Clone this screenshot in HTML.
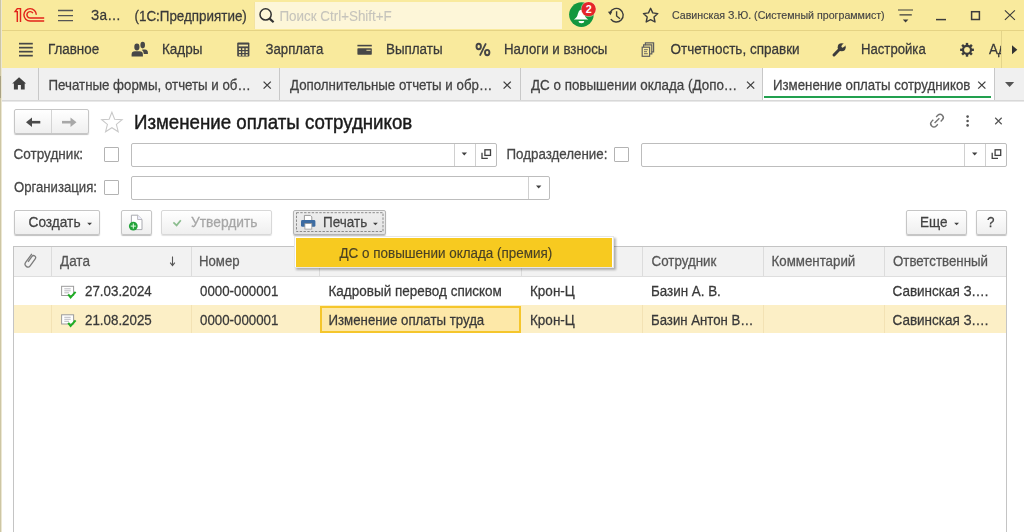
<!DOCTYPE html>
<html><head><meta charset="utf-8">
<style>
html,body{margin:0;padding:0;}
body{width:1024px;height:532px;overflow:hidden;position:relative;background:#fff;font-family:"Liberation Sans",sans-serif;color:#404040;}
.a{position:absolute;}
.t{position:absolute;white-space:nowrap;line-height:1;font-size:13.5px;transform:scaleY(1.05);transform-origin:0 0.8467em;-webkit-text-stroke:0.25px currentColor;}
svg{position:absolute;overflow:visible;}
#titlebar{left:0;top:0;width:1024px;height:30px;background:#f9ea9d;}
#tbline{left:0;top:30px;width:1024px;height:1px;background:#e5d384;}
#sections{left:0;top:31px;width:1024px;height:37px;background:#f9ea9d;}
#tabs{left:0;top:68px;width:1024px;height:32px;background:#f0f0f0;}
#tabsline{left:0;top:100px;width:1024px;height:2px;background:linear-gradient(#d8d8d8 50%,#e8e8e8 50%);}
#leftedge{left:0;top:0;width:2px;height:532px;background:linear-gradient(90deg,#cdc6a4 0,#cdc6a4 1px,#ece7d2 1px,#ece7d2 2px);}
#leftdark{left:0;top:76px;width:1px;height:22px;background:#a9a283;}
.vd{position:absolute;width:1px;background:#c8c8c8;}
.field{position:absolute;border:1px solid #bdbdbd;border-radius:2px;background:#fff;box-sizing:border-box;}
.chk{position:absolute;width:15px;height:15px;border:1px solid #b3b3b3;border-radius:1px;box-sizing:border-box;background:#fff;}
.btn{position:absolute;box-sizing:border-box;border:1px solid #c6c6c6;border-radius:2px;background:linear-gradient(#ffffff,#efefef);box-shadow:0 1px 1px rgba(0,0,0,0.25);}
</style></head>
<body>
<div class="a" id="titlebar"></div>
<div class="a" id="tbline"></div>
<div class="a" id="sections"></div>
<div class="a" id="tabs"></div>
<div class="a" id="tabsline"></div>

<!-- ===== Title bar ===== -->
<svg style="left:0;top:0" width="60" height="30" viewBox="0 0 60 30">
  <g fill="none" stroke="#e2231a" stroke-width="1.45" stroke-linecap="butt">
    <path d="M17.3 22 V11.6 H15.1 L17.3 8.6 H20.5 V22"/>
    <path d="M36.3 14.8 A6.2 6.2 0 1 0 30.1 21 H44.2"/>
    <path d="M32.9 13.2 A3.2 3.2 0 1 0 30.1 18 H44.2"/>
  </g>
</svg>
<svg style="left:0;top:0" width="80" height="30">
  <g stroke="#555" stroke-width="1.3"><path d="M58 10.5H73M58 15.6H73M58 20.6H73"/></g>
</svg>
<div class="t" style="left:91px;top:9px;color:#393939;font-size:13.6px;letter-spacing:0.2px">За…</div>
<div class="t" style="left:134.5px;top:10px;color:#393939;font-size:13.4px">(1С:Предприятие)</div>
<div class="a" style="left:255px;top:2px;width:307px;height:26.5px;background:#fdf6d8;box-shadow:-1px 0 0 #f3e3a0"></div>
<svg style="left:0;top:0" width="300" height="30">
  <g fill="none" stroke="#333"><circle cx="265.6" cy="14.4" r="5.6" stroke-width="1.5"/><path d="M269.6 18.6 L273.6 22.2" stroke-width="2.2"/></g>
</svg>
<div class="t" style="left:279.5px;top:10px;color:#c6c4bc;font-size:13.4px;-webkit-text-stroke:0.1px #c6c4bc">Поиск Ctrl+Shift+F</div>
<svg style="left:0;top:0" width="700" height="32">
  <circle cx="581.4" cy="14.6" r="12.3" fill="#13973f"/>
  <path d="M581 9.8 C578.6 10.2 578.4 13 577.4 15.6 C576.8 17.2 575.4 18.6 573.8 19.5 H588.4 C586.6 18.6 585.3 17.2 584.7 15.6 C583.8 13 583.5 10.2 581 9.8 Z" fill="#fff"/>
  <path d="M578.6 21 H584.2 A2.8 2.2 0 0 1 578.6 21 Z" fill="#fff"/>
  <circle cx="588.6" cy="9.1" r="7.9" fill="#fbeecb" opacity="0.55"/>
  <circle cx="588.6" cy="9.1" r="7.2" fill="#e5242a"/>
  <text x="588.7" y="12.6" font-family="Liberation Sans" font-weight="bold" font-size="10.8" fill="#fff" text-anchor="middle">2</text>
  <g fill="none" stroke="#3c3c3c" stroke-width="1.4">
    <path d="M610.2 12.4 A6.8 6.8 0 1 1 610.8 19.1"/>
    <path d="M616.6 11.2 V16 L620 18.8"/>
    <path d="M650.6 8.3 L652.7 12.9 L657.8 13.6 L654 17.1 L655 22 L650.6 19.6 L646.2 22 L647.2 17.1 L643.4 13.6 L648.5 12.9 Z" stroke-linejoin="round"/>
  </g>
  <path d="M607.9 11.8 L612.3 11.4 L610.4 15.2 Z" fill="#3c3c3c"/>
</svg>
<div class="t" style="left:672px;top:10px;font-size:10.65px;color:#444;-webkit-text-stroke:0.15px #444">Савинская З.Ю. (Системный программист)</div>
<svg style="left:0;top:0" width="1024" height="32">
  <g stroke="#3c3c3c" stroke-width="1.2" fill="none">
    <path d="M898 10H913M899.5 14.8H911.8"/>
    <path d="M936 19.6H946" stroke-width="1.5"/>
    <rect x="971.6" y="11.7" width="7.8" height="7.8" stroke-width="1.5"/>
    <path d="M1004.9 10.4 L1014.9 19.9 M1014.9 10.4 L1004.9 19.9" stroke-width="1.15"/>
  </g>
  <path d="M902.8 19.5 H908.4 L905.6 22.6 Z" fill="#3c3c3c"/>
</svg>

<!-- ===== Sections bar ===== -->
<svg style="left:0;top:0" width="1024" height="68">
  <g fill="#474747">
    <rect x="19" y="42.8" width="13.8" height="1.7"/>
    <rect x="19" y="46.8" width="13.8" height="1.7"/>
    <rect x="19" y="50.8" width="13.8" height="1.7"/>
    <rect x="19" y="54.8" width="13.8" height="1.7"/>
    <!-- people -->
    <ellipse cx="142.7" cy="45.1" rx="2.3" ry="3.3"/>
    <path d="M142.3 49.6 H145 Q147.9 49.9 147.9 52.5 V54 H143.8 Q143.6 51.3 142.3 50.6 Z"/>
    <ellipse cx="136.9" cy="47" rx="2.6" ry="3.4"/>
    <path d="M131.6 56.5 V54.5 Q131.6 51.4 135 51.3 H139.5 Q142.9 51.4 142.9 54.5 V56.5 Z"/>
    <!-- calculator -->
    <rect x="237.2" y="42.6" width="12.2" height="14" rx="1"/>
    <!-- card -->
    <rect x="357.4" y="44.8" width="14.4" height="1.6"/>
    <rect x="357.4" y="48.3" width="14.4" height="6.4" rx="0.6"/>
  </g>
  <g fill="#f6e8a6">
    <rect x="238.6" y="44.6" width="9.4" height="1.8"/>
    <rect x="238.9" y="48.2" width="2" height="1.8"/><rect x="242.3" y="48.2" width="2" height="1.8"/><rect x="245.7" y="48.2" width="2" height="1.8"/>
    <rect x="238.9" y="51.2" width="2" height="1.8"/><rect x="242.3" y="51.2" width="2" height="1.8"/><rect x="245.7" y="51.2" width="2" height="1.8"/>
    <rect x="238.9" y="54.2" width="2" height="1.6"/><rect x="242.3" y="54.2" width="2" height="1.6"/><rect x="245.7" y="54.2" width="2" height="1.6"/>
    <rect x="366.4" y="49.8" width="4.2" height="0.9"/>
  </g>
  <!-- docs -->
  <g fill="none" stroke="#5f5f5f" stroke-width="1.2">
    <path d="M645.4 45.2 V42.8 H653.6 V51.8 H651.6"/>
    <path d="M643.6 46.9 V44.8 H651.8 V53.8 H650.1"/>
    <rect x="642.2" y="47.2" width="7.4" height="9.1"/>
    <path d="M644 49.7H647.8M644 51.7H647M644 53.7H647.8" stroke-width="0.9"/>
  </g>
  <!-- wrench -->
  <path d="M834 55 L839.6 49.2" stroke="#3c3c3c" stroke-width="3" stroke-linecap="round"/>
  <circle cx="841.7" cy="47.3" r="4" fill="#3c3c3c"/>
  <path d="M842.6 46.4 L845.4 43.6" stroke="#f9ea9d" stroke-width="2.4" stroke-linecap="round"/>
  <path d="M843.2 45.8 L847.5 41.5" stroke="#f9ea9d" stroke-width="2.4"/>
  <!-- gear -->
  <g transform="translate(967,49.8)">
    <g fill="#3c3c3c">
      <rect x="-1.2" y="-6.9" width="2.4" height="13.8"/>
      <rect x="-1.2" y="-6.9" width="2.4" height="13.8" transform="rotate(45)"/>
      <rect x="-1.2" y="-6.9" width="2.4" height="13.8" transform="rotate(90)"/>
      <rect x="-1.2" y="-6.9" width="2.4" height="13.8" transform="rotate(135)"/>
    </g>
    <circle r="4" fill="none" stroke="#3c3c3c" stroke-width="2.2"/>
    <circle r="2.9" fill="#f9ea9d"/>
  </g>
  <path d="M1012 45.2 V54.2 L1017.3 49.7 Z" fill="#333"/>
</svg>
<div class="t" style="left:48px;top:43px;color:#393939;font-size:13.4px">Главное</div>
<div class="t" style="left:162px;top:43px;color:#393939;font-size:13.5px">Кадры</div>
<div class="t" style="left:265.5px;top:43px;color:#393939;font-size:13.2px">Зарплата</div>
<div class="t" style="left:386px;top:43px;color:#393939;font-size:13.4px">Выплаты</div>
<svg style="left:0;top:0" width="500" height="68"><g fill="none" stroke="#454545"><ellipse cx="478.7" cy="46.5" rx="2.2" ry="2.7" stroke-width="1.9"/><ellipse cx="487.2" cy="52.6" rx="2.2" ry="2.7" stroke-width="1.9"/><path d="M485.9 43.4 L479.9 55.7" stroke-width="1.8"/></g></svg>
<div class="t" style="left:504px;top:43px;color:#393939;font-size:13.3px">Налоги и взносы</div>
<div class="t" style="left:670.5px;top:43px;color:#393939;font-size:13.5px">Отчетность, справки</div>
<div class="t" style="left:861px;top:43px;color:#393939;font-size:13.15px">Настройка</div>
<div class="a" style="left:988px;top:31px;width:13px;height:37px;overflow:hidden"><div class="t" style="left:1px;top:12px;color:#393939">Администрирование</div></div>
<div class="vd" style="left:1001px;top:31px;height:37px;background:#e3d48a"></div>

<!-- ===== Tabs ===== -->
<div class="a" style="left:763px;top:68px;width:231px;height:32px;background:#fff"></div>
<div class="a" style="left:764px;top:96px;width:227px;height:2px;background:#22a04f"></div>
<div class="vd" style="left:38px;top:68px;height:32px"></div>
<div class="vd" style="left:279px;top:68px;height:32px"></div>
<div class="vd" style="left:520px;top:68px;height:32px"></div>
<div class="vd" style="left:762px;top:68px;height:32px"></div>
<div class="vd" style="left:994px;top:68px;height:32px"></div>
<svg style="left:0;top:0" width="1024" height="100">
  <path d="M19.05 77.3 L26.1 83.6 H24.7 V89.4 H20.9 V85.1 H17.9 V89.4 H13.9 V83.6 H12.2 Z" fill="#404040"/>
  <g stroke="#404040" stroke-width="1.3">
    <path d="M263.6 81.6 L270.8 88.6 M270.8 81.6 L263.6 88.6"/>
    <path d="M503.6 81.6 L510.8 88.6 M510.8 81.6 L503.6 88.6"/>
    <path d="M747 81.6 L754.2 88.6 M754.2 81.6 L747 88.6"/>
    <path d="M978.2 81.6 L985.4 88.6 M985.4 81.6 L978.2 88.6"/>
  </g>
  <path d="M1005 82 H1014.2 L1009.6 87 Z" fill="#555"/>
</svg>
<div class="t" style="left:48.5px;top:79px;color:#424242;font-size:13.3px">Печатные формы, отчеты и об…</div>
<div class="t" style="left:290px;top:79px;color:#424242;font-size:13.3px">Дополнительные отчеты и обр…</div>
<div class="t" style="left:531px;top:79px;color:#424242;font-size:13.4px">ДС о повышении оклада (Допо…</div>
<div class="t" style="left:773px;top:79px;color:#424242;font-size:13.25px">Изменение оплаты сотрудников</div>

<!-- ===== Form header ===== -->
<div class="btn" style="left:13.5px;top:109px;width:75.5px;height:25px"></div>
<div class="a" style="left:51px;top:110px;width:1px;height:23px;background:#d4d4d4"></div>
<svg style="left:0;top:0" width="1024" height="140">
  <path d="M30 122.2 H40.3" stroke="#4a4a4a" stroke-width="2.6"/><path d="M26 122.2 L32 117.4 V127 Z" fill="#4a4a4a"/>
  <path d="M62 122.2 H72.3" stroke="#a8a8a8" stroke-width="2.6"/><path d="M76.5 122.2 L70.5 117.4 V127 Z" fill="#a8a8a8"/>
  <path d="M111.90 112.20 L114.66 119.20 L122.17 119.66 L116.37 124.45 L118.25 131.74 L111.90 127.70 L105.55 131.74 L107.43 124.45 L101.63 119.66 L109.14 119.20 Z" fill="none" stroke="#c8c8c8" stroke-width="1.05" stroke-linejoin="miter"/>
  <!-- link -->
  <g fill="none" stroke="#747474" stroke-width="1.4" transform="rotate(45 937 120.6)">
    <path d="M933.8 118.6 V116.3 A3.2 3.2 0 0 1 940.2 116.3 V118.6"/>
    <path d="M940.2 122.6 V124.9 A3.2 3.2 0 0 1 933.8 124.9 V122.6"/>
    <path d="M937 117.2 V124"/>
  </g>
  <g fill="#555"><circle cx="967.6" cy="116.6" r="1.3"/><circle cx="967.6" cy="121" r="1.3"/><circle cx="967.6" cy="125.4" r="1.3"/></g>
  <g stroke="#555" stroke-width="1.2"><path d="M995.2 117.8 L1001.7 124.2 M1001.7 117.8 L995.2 124.2"/></g>
</svg>
<div class="t" style="left:134px;top:113.5px;font-size:18.7px;color:#1a1a1a;-webkit-text-stroke:0.4px #1a1a1a">Изменение оплаты сотрудников</div>

<!-- ===== Filters ===== -->
<div class="t" style="left:13.5px;top:147.5px;color:#474747;font-size:13.55px">Сотрудник:</div>
<div class="chk" style="left:104px;top:146.5px"></div>
<div class="field" style="left:131px;top:143px;width:366px;height:24px"></div>
<div class="vd" style="left:454px;top:144px;height:22px;background:#d0d0d0"></div>
<div class="vd" style="left:475px;top:144px;height:22px;background:#d0d0d0"></div>
<div class="t" style="left:506.5px;top:147.5px;color:#474747;font-size:13.35px">Подразделение:</div>
<div class="chk" style="left:614px;top:146.5px"></div>
<div class="field" style="left:641px;top:143px;width:366px;height:24px"></div>
<div class="vd" style="left:964px;top:144px;height:22px;background:#d0d0d0"></div>
<div class="vd" style="left:985px;top:144px;height:22px;background:#d0d0d0"></div>
<div class="t" style="left:14px;top:180.5px;color:#474747;font-size:13.15px">Организация:</div>
<div class="chk" style="left:104px;top:179.5px"></div>
<div class="field" style="left:131px;top:176px;width:419px;height:24px"></div>
<div class="vd" style="left:528px;top:177px;height:22px;background:#d0d0d0"></div>
<svg style="left:0;top:0" width="1024" height="210">
  <g fill="#404040">
    <path d="M461.6 152.4 H467 L464.3 155.6 Z"/>
    <path d="M972 152.4 H977.4 L974.7 155.6 Z"/>
    <path d="M536 185.4 H541.4 L538.7 188.6 Z"/>
  </g>
  <g fill="none" stroke="#404040" stroke-width="1.3">
    <rect x="484.9" y="149.8" width="5.6" height="5.6"/>
    <path d="M482 152.7 V158.4 H487.8"/>
    <rect x="995.1" y="149.8" width="5.6" height="5.6"/>
    <path d="M992.2 152.7 V158.4 H998"/>
  </g>
</svg>

<!-- ===== Buttons ===== -->
<div class="btn" style="left:14px;top:210px;width:86px;height:25px"></div>
<div class="t" style="left:28.5px;top:215.5px;color:#424242;font-size:13.7px">Создать</div>
<div class="btn" style="left:121px;top:210px;width:31px;height:25px"></div>
<div class="btn" style="left:161px;top:210px;width:111px;height:25px;box-shadow:0 1px 1px rgba(0,0,0,0.12);border-color:#d8d8d8"></div>
<div class="t" style="left:191px;top:215.5px;color:#a6a6a6;font-size:13.8px">Утвердить</div>
<div class="btn" style="left:293px;top:210px;width:93px;height:24.5px;background:linear-gradient(#eeeeee,#e3e3e3);border-color:#b4b4b4"></div>
<div class="t" style="left:323px;top:215.5px;color:#454545">Печать</div>
<div class="btn" style="left:906px;top:210px;width:61px;height:25px"></div>
<div class="t" style="left:920px;top:215.5px;color:#424242">Еще</div>
<div class="btn" style="left:976px;top:210px;width:31px;height:25px"></div>
<div class="t" style="left:987px;top:215.5px;color:#424242">?</div>
<svg style="left:0;top:0" width="1024" height="240">
  <g fill="#404040">
    <path d="M87.2 222.8 H92 L89.6 225.2 Z"/>
    <path d="M373 222.8 H377.8 L375.4 225.2 Z"/>
    <path d="M954.2 222.8 H959 L956.6 225.2 Z"/>
  </g>
  <!-- doc plus -->
  <path d="M131.4 215.2 H137.6 L142 219.5 V229.6 H131.4 Z" fill="#fff" stroke="#a9aab0" stroke-width="1"/>
  <path d="M137.6 215.2 V219.5 H142" fill="#eef" stroke="#a9aab0" stroke-width="0.8"/>
  <circle cx="133.3" cy="226.1" r="4.4" fill="#23a33a"/>
  <path d="M133.3 223.5 V228.7 M130.7 226.1 H135.9" stroke="#e8ffe8" stroke-width="1"/>
  <!-- check -->
  <path d="M173.4 222.4 L176.6 225.4 L180.8 220.2" fill="none" stroke="#8cbd8f" stroke-width="1.7"/>
  <!-- printer -->
  <path d="M304.4 215.4 H310.3 L311.8 216.9 V220.6 H304.4 Z" fill="#fff" stroke="#8e8e8e" stroke-width="0.9"/>
  <rect x="301" y="220.1" width="14.4" height="6.7" rx="1.4" fill="#3d6ca2"/>
  <rect x="304.9" y="223.6" width="6.9" height="5.5" fill="#fff" stroke="#9a9a9a" stroke-width="0.8"/>
  <rect x="296.5" y="212.7" width="86.5" height="18.8" fill="none" stroke="#8a8a8a" stroke-width="1" stroke-dasharray="2.4 1.4"/>
</svg>

<!-- ===== Table ===== -->
<div class="a" style="left:13px;top:246px;width:994px;height:300px;border:1px solid #c4c4c4;box-sizing:border-box;background:#fff"></div>
<div class="a" style="left:14px;top:247px;width:992px;height:29px;background:#f2f2f2"></div>
<div class="a" style="left:14px;top:276px;width:992px;height:1px;background:#dedede"></div>
<div class="vd" style="left:51px;top:247px;height:29px;background:#dcdcdc"></div>
<div class="vd" style="left:191px;top:247px;height:29px;background:#dcdcdc"></div>
<div class="vd" style="left:319px;top:247px;height:29px;background:#dcdcdc"></div>
<div class="vd" style="left:521px;top:247px;height:29px;background:#dcdcdc"></div>
<div class="vd" style="left:642px;top:247px;height:29px;background:#dcdcdc"></div>
<div class="vd" style="left:763px;top:247px;height:29px;background:#dcdcdc"></div>
<div class="vd" style="left:884px;top:247px;height:29px;background:#dcdcdc"></div>
<!-- row2 -->
<div class="a" style="left:14px;top:305px;width:992px;height:28px;background:#fcefc6"></div>
<div class="vd" style="left:51px;top:305px;height:28px;background:#f3e2b4"></div>
<div class="vd" style="left:191px;top:305px;height:28px;background:#f3e2b4"></div>
<div class="vd" style="left:642px;top:305px;height:28px;background:#f3e2b4"></div>
<div class="vd" style="left:763px;top:305px;height:28px;background:#f3e2b4"></div>
<div class="vd" style="left:884px;top:305px;height:28px;background:#f3e2b4"></div>
<div class="a" style="left:320px;top:306px;width:201px;height:27px;border:2px solid #f5c62c;box-sizing:border-box;background:#fde8a8"></div>

<div class="t" style="left:60px;top:254.5px;color:#555">Дата</div>
<div class="t" style="left:199px;top:254.5px;color:#555;font-size:13.2px">Номер</div>
<div class="t" style="left:651.5px;top:254.5px;color:#555;font-size:13.35px">Сотрудник</div>
<div class="t" style="left:771.5px;top:254.5px;color:#555;font-size:13.3px">Комментарий</div>
<div class="t" style="left:893px;top:254.5px;color:#555;font-size:13.3px">Ответственный</div>
<svg style="left:0;top:0" width="1024" height="340">
  <path d="M172.5 256.5 V265" stroke="#555" stroke-width="1.1"/>
  <path d="M170.2 262.6 L172.5 265.6 L174.8 262.6" fill="none" stroke="#555" stroke-width="1.1"/>
  <!-- paperclip -->
  <g fill="none" stroke="#7c7c7c" stroke-width="1.3" transform="rotate(36 30.6 260.4)">
    <path d="M27.8 254.4 V265 A2.8 2.8 0 0 0 33.4 265 V256.4 A2 2 0 0 0 29.4 256.4 V263"/>
  </g>
  <!-- row icons -->
  <g>
    <rect x="61.6" y="286.3" width="12" height="9.2" fill="#fff" stroke="#9b9b9b" stroke-width="1"/>
    <path d="M64.3 288.8 H70.7 M64.3 290.8 H70.7 M64.3 292.8 H69" stroke="#a8a8b0" stroke-width="0.8"/>
    <path d="M68.2 294.4 L70.6 297.4 L75.6 291.8" fill="none" stroke="#1fae24" stroke-width="2"/>
  </g>
  <g transform="translate(0,28.5)">
    <rect x="61.6" y="286.3" width="12" height="9.2" fill="#fff" stroke="#9b9b9b" stroke-width="1"/>
    <path d="M64.3 288.8 H70.7 M64.3 290.8 H70.7 M64.3 292.8 H69" stroke="#a8a8b0" stroke-width="0.8"/>
    <path d="M68.2 294.4 L70.6 297.4 L75.6 291.8" fill="none" stroke="#1fae24" stroke-width="2"/>
  </g>
</svg>
<div class="t" style="left:85px;top:285px;color:#393939;font-size:13.35px">27.03.2024</div>
<div class="t" style="left:200px;top:285px;color:#393939;font-size:13.3px">0000-000001</div>
<div class="t" style="left:328.5px;top:285px;color:#393939">Кадровый перевод списком</div>
<div class="t" style="left:530px;top:285px;color:#393939">Крон-Ц</div>
<div class="t" style="left:651px;top:285px;color:#393939;font-size:13.4px">Базин А. В.</div>
<div class="t" style="left:892.5px;top:285px;color:#393939">Савинская З.…</div>

<div class="t" style="left:85px;top:314px;color:#393939;font-size:13.35px">21.08.2025</div>
<div class="t" style="left:200px;top:314px;color:#393939;font-size:13.3px">0000-000001</div>
<div class="t" style="left:328.5px;top:314px;color:#393939;font-size:13.25px">Изменение оплаты труда</div>
<div class="t" style="left:530px;top:314px;color:#393939">Крон-Ц</div>
<div class="t" style="left:651px;top:314px;color:#393939;font-size:13.2px">Базин Антон В…</div>
<div class="t" style="left:892.5px;top:314px;color:#393939">Савинская З.…</div>

<!-- ===== Dropdown menu ===== -->
<div class="a" style="left:296px;top:238px;width:320px;height:32px;background:rgba(0,0,0,0.28);filter:blur(0.8px)"></div>
<div class="a" style="left:294px;top:236px;width:320px;height:32px;background:#fff;border:1px solid #e6e6e6;box-sizing:border-box"></div>
<div class="a" style="left:295.5px;top:237.5px;width:316.7px;height:29.4px;background:#f7ca20"></div>
<div class="t" style="left:339.5px;top:246.5px;color:#4a4224;font-size:13.45px;-webkit-text-stroke:0.15px #4a4224">ДС о повышении оклада (премия)</div>

<div class="a" id="leftedge"></div>
<div class="a" id="leftdark"></div>
</body></html>
